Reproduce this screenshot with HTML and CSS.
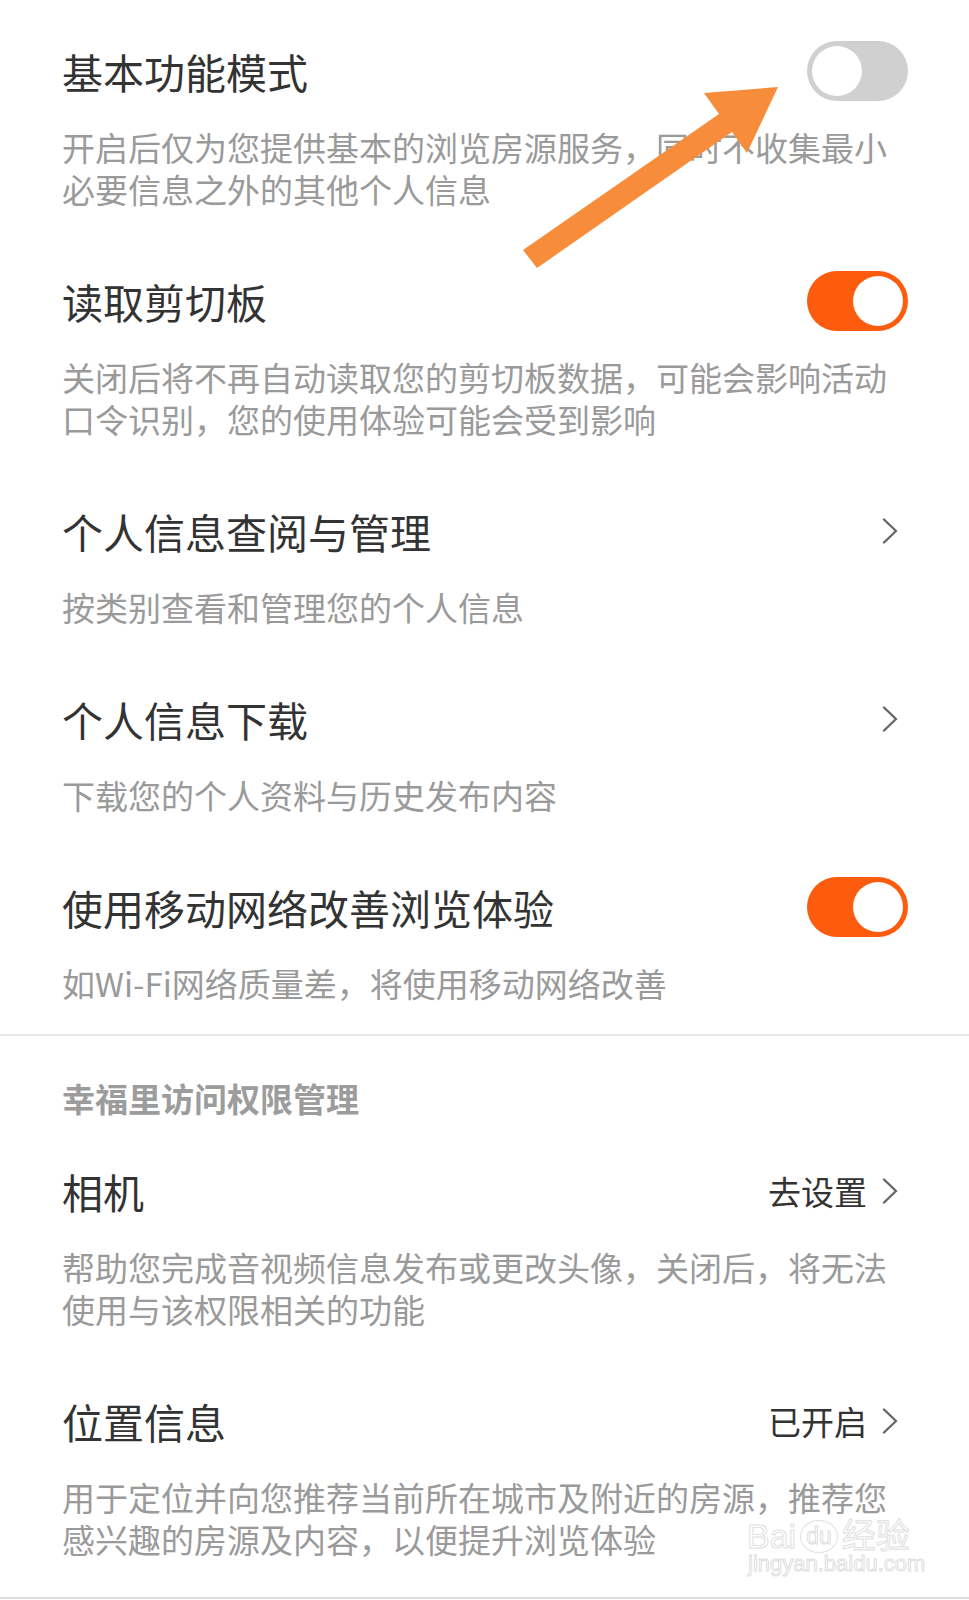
FILE: index.html
```html
<!DOCTYPE html>
<html lang="zh-CN">
<head>
  <meta charset="UTF-8">
  <meta name="viewport" content="width=device-width, initial-scale=1.0">
  <link rel="stylesheet" href="styles.css">
  <title>隐私设置</title>
</head>
<body>
  <div class="page">
    <section class="group group-main">
      <div class="item">
        <div class="item-head">
          <span class="item-title">基本功能模式</span>
          <span class="switch"><span class="knob"></span></span>
        </div>
        <p class="item-desc">开启后仅为您提供基本的浏览房源服务，同时不收集最小必要信息之外的其他个人信息</p>
      </div>

      <div class="item">
        <div class="item-head">
          <span class="item-title">读取剪切板</span>
          <span class="switch on"><span class="knob"></span></span>
        </div>
        <p class="item-desc">关闭后将不再自动读取您的剪切板数据，可能会影响活动口令识别，您的使用体验可能会受到影响</p>
      </div>

      <div class="item">
        <div class="item-head">
          <span class="item-title">个人信息查阅与管理</span>
          <span class="item-link">
            <svg class="chevron" viewBox="0 0 16 26"><path d="M2 1.5 L14 13 L2 24.5"/></svg>
          </span>
        </div>
        <p class="item-desc">按类别查看和管理您的个人信息</p>
      </div>

      <div class="item">
        <div class="item-head">
          <span class="item-title">个人信息下载</span>
          <span class="item-link">
            <svg class="chevron" viewBox="0 0 16 26"><path d="M2 1.5 L14 13 L2 24.5"/></svg>
          </span>
        </div>
        <p class="item-desc">下载您的个人资料与历史发布内容</p>
      </div>

      <div class="item">
        <div class="item-head">
          <span class="item-title">使用移动网络改善浏览体验</span>
          <span class="switch on"><span class="knob"></span></span>
        </div>
        <p class="item-desc">如Wi-Fi网络质量差，将使用移动网络改善</p>
      </div>
    </section>

    <section class="group group-perm">
      <h2 class="group-title">幸福里访问权限管理</h2>

      <div class="item">
        <div class="item-head">
          <span class="item-title">相机</span>
          <span class="item-link">
            <span class="item-value">去设置</span>
            <svg class="chevron" viewBox="0 0 16 26"><path d="M2 1.5 L14 13 L2 24.5"/></svg>
          </span>
        </div>
        <p class="item-desc">帮助您完成音视频信息发布或更改头像，关闭后，将无法使用与该权限相关的功能</p>
      </div>

      <div class="item">
        <div class="item-head">
          <span class="item-title">位置信息</span>
          <span class="item-link">
            <span class="item-value">已开启</span>
            <svg class="chevron" viewBox="0 0 16 26"><path d="M2 1.5 L14 13 L2 24.5"/></svg>
          </span>
        </div>
        <p class="item-desc">用于定位并向您推荐当前所在城市及附近的房源，推荐您感兴趣的房源及内容，以便提升浏览体验</p>
      </div>
    </section>
  </div>

  <!-- annotation arrow pointing at the first switch -->
  <svg class="annotation" viewBox="0 0 969 300">
    <polygon points="523,250 719,114 704,93 778,87 747,153 732,132 537,268"/>
  </svg>

  <div class="watermark">
    <div class="wm-logo">Bai<span class="wm-du">du</span>经验</div>
    <div class="wm-url">jingyan.baidu.com</div>
  </div>
</body>
</html>
```

FILE: styles.css
```css
body {
  margin: 0;
  background-color: #fff;
  font-family: "Noto Sans CJK SC", "Noto Sans", sans-serif;
  color: #333;
}

.page {
  width: 969px;
}

.group-main {
  padding-bottom: 10px;
  border-bottom: 2px solid #e9e9e9;
}

.group-perm {
  padding-bottom: 17px;
  border-bottom: 2px solid #dcdcdc;
}

.group-title {
  margin: 0;
  padding: 40px 61px 0 62px;
  font-size: 33px;
  line-height: 44px;
  font-weight: 700;
  color: #9c9c9c;
}

.item {
  padding: 41px 61px 20px 62px;
}

.item-head {
  display: flex;
  justify-content: space-between;
  align-items: center;
  height: 60px;
}

.item-title {
  font-size: 41px;
  line-height: 60px;
  color: #333;
}

.item-desc {
  margin: 25px 0 0;
  font-size: 33px;
  line-height: 42px;
  color: #9a9a9a;
}

.item-link {
  display: flex;
  align-items: center;
  gap: 15px;
  margin-right: 10px;
}

.item-value {
  font-size: 33px;
  line-height: 44px;
  color: #333;
}

.chevron {
  width: 16px;
  height: 26px;
  fill: none;
  stroke: #666;
  stroke-width: 2.4;
  stroke-linecap: round;
  stroke-linejoin: round;
}

.switch {
  display: flex;
  align-items: center;
  box-sizing: border-box;
  width: 101px;
  height: 60px;
  padding: 0 5px;
  border-radius: 30px;
  background-color: #d0d0d0;
}

.switch.on {
  justify-content: flex-end;
  background-color: #fd5c0e;
}

.knob {
  width: 50px;
  height: 50px;
  border-radius: 50%;
  background-color: #fff;
}

.annotation {
  position: absolute;
  top: 0;
  left: 0;
  width: 969px;
  height: 300px;
  pointer-events: none;
}

.annotation polygon {
  fill: #f78d3b;
}

.watermark {
  position: absolute;
  top: 1521px;
  left: 747px;
  font-family: "Liberation Sans", "Noto Sans CJK SC", sans-serif;
  color: rgba(255, 255, 255, 0.6);
  -webkit-text-stroke: 1px #e0e0e0;
  pointer-events: none;
}

.wm-logo {
  display: flex;
  align-items: center;
  height: 31px;
  font-size: 34px;
  line-height: 31px;
}

.wm-du {
  margin: 0 4px;
  padding: 0 5px;
  font-size: 23px;
  line-height: 31px;
  border: 1px solid #e0e0e0;
  border-radius: 50%;
}

.wm-url {
  font-size: 22px;
  line-height: 24px;
  padding-left: 1px;
}
```
